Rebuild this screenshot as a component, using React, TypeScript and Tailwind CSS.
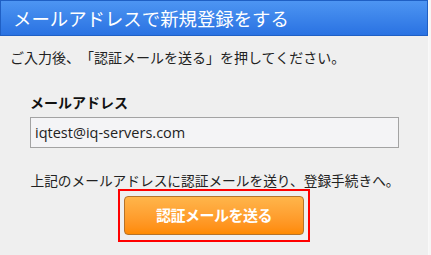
const jp = { fontFamily: '"Noto Sans CJK JP", "Noto Sans", sans-serif' };

const App = () => {
  return (
    <div className="w-[431px] h-[255px] bg-[#f6f6f6] flex" style={jp}>
      <div className="w-[429px] h-full bg-[#efefef] border-r border-[#f9f9f9] flex flex-col">
        {/* Title bar */}
        <header className="h-[36px] flex items-center pl-[12px] bg-gradient-to-b from-[#4d95f2] to-[#2a72e2] border border-[#1f5fc4]">
          <h1 className="text-[18.4px] leading-none text-white">
            メールアドレスで新規登録をする
          </h1>
        </header>

        <p className="mt-[11px] pl-[10px] text-[14px] leading-[20px] text-[#222] [text-spacing-trim:space-all]">
          ご入力後、「認証メールを送る」を押してください。
        </p>

        <div className="mt-[25px] pl-[30px] pr-[29px]">
          <label className="block text-[14px] leading-[20px] font-bold text-[#111]">
            メールアドレス
          </label>
          <div className="mt-[5px] h-[31px] flex items-center px-[4px] bg-[#f4f4f6] border border-[#a3a3a3]">
            <span
              className="text-[14.5px] text-[#222]"
              style={{ fontFamily: '"Open Sans", "Noto Sans", sans-serif' }}
            >
              iqtest@iq-servers.com
            </span>
          </div>
        </div>

        <p className="mt-[22px] text-center text-[13.7px] leading-[20px] text-[#222] pl-[2px]">
          上記のメールアドレスに認証メールを送り、登録手続きへ。
        </p>

        <div className="mt-[-1px] flex justify-center">
          <div className="border-2 border-[#ff0000] px-[4px] py-[5px]">
            <button className="w-[180px] h-[39px] rounded-[4px] border border-[#b5732a] bg-gradient-to-b from-[#ffb54a] to-[#ff8a00] text-white font-bold text-[15px] tracking-[-0.5px]">
              認証メールを送る
            </button>
          </div>
        </div>
      </div>
    </div>
  );
};

export default App;
